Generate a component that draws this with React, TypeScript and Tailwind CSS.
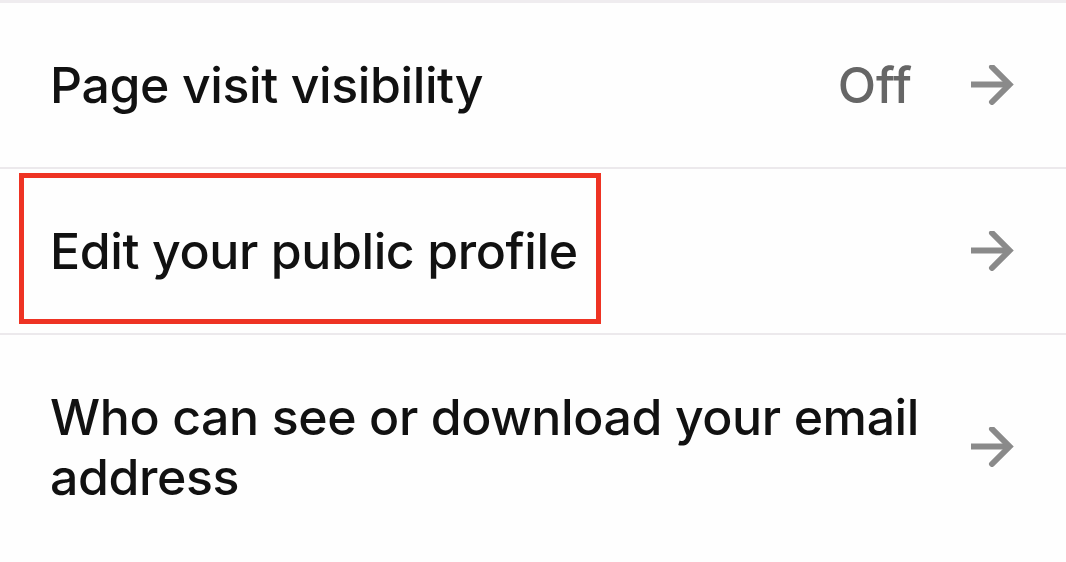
import React from "react";

function Arrow() {
  return (
    <svg width="44" height="40" viewBox="0 0 44 40" className="shrink-0">
      <path d="M1 19.5 H39" stroke="#8a8a8a" strokeWidth="6" fill="none" />
      <path d="M22 2 L39.5 19.5 L22 37" stroke="#8a8a8a" strokeWidth="6" fill="none" strokeLinejoin="miter" strokeLinecap="round" />
    </svg>
  );
}

export default function App() {
  const font = { fontFamily: "Inter, 'Noto Sans', sans-serif" };
  return (
    <div className="w-[1066px] h-[562px] overflow-hidden bg-[#fefefe]" style={font}>
      <div className="border-t-[3px] border-[#efecef]">
        <div className="flex items-center pl-[50px] pr-[52px] py-[52px] border-b-2 border-[#ece9ec]">
          <div className="flex-1 text-[50px] leading-[60px] font-medium text-[#111111] tracking-[-0.4px]">
            Page visit visibility
          </div>
          <div className="text-[50px] leading-[60px] font-medium text-[#666666] mr-[58px]">Off</div>
          <Arrow />
        </div>
        <div className="relative flex items-center pl-[50px] pr-[52px] py-[52px] border-b-2 border-[#ece9ec]">
          <div className="flex-1 text-[50px] leading-[60px] font-medium text-[#111111] tracking-[-0.4px]">
            Edit your public profile
          </div>
          <Arrow />
          <div className="absolute left-[19px] top-[4px] w-[582px] h-[151px] border-[5px] border-[#ee3323]" />
        </div>
        <div className="flex items-center pl-[50px] pr-[52px] py-[52px]">
          <div className="flex-1 pr-[40px] text-[50px] leading-[60px] font-medium text-[#111111] tracking-[-0.4px]">
            Who can see or download your email address
          </div>
          <Arrow />
        </div>
      </div>
    </div>
  );
}
